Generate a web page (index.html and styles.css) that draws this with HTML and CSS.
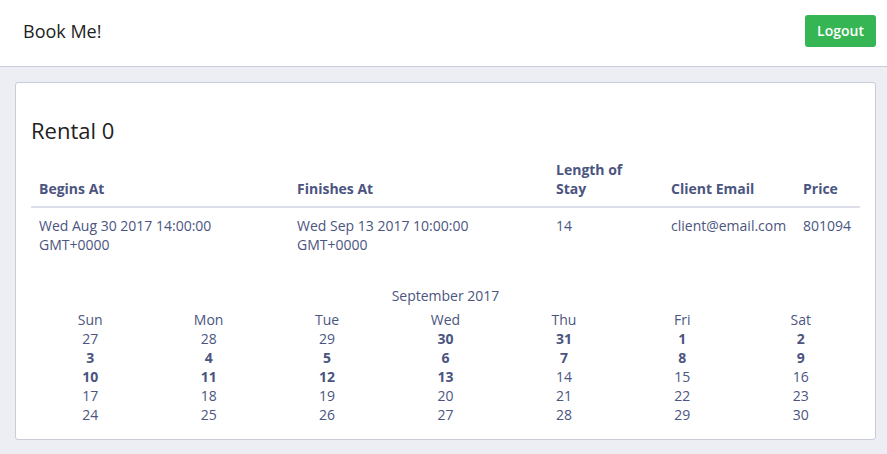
FILE: index.html
```html
<!DOCTYPE html>
<html>
<head>
<meta charset="utf-8">
<link rel="stylesheet" href="styles.css">
</head>
<body>
<header class="topbar">
  <div class="brand">Book Me!</div>
  <button class="logout">Logout</button>
</header>
<main class="page">
  <section class="card">
    <h2 class="title">Rental 0</h2>
    <table class="rentals">
      <thead>
        <tr>
          <th class="c1">Begins At</th>
          <th class="c2">Finishes At</th>
          <th class="c3">Length of Stay</th>
          <th class="c4">Client Email</th>
          <th class="c5">Price</th>
        </tr>
      </thead>
      <tbody>
        <tr>
          <td>Wed Aug 30 2017 14:00:00 GMT+0000</td>
          <td>Wed Sep 13 2017 10:00:00 GMT+0000</td>
          <td>14</td>
          <td>client@email.com</td>
          <td>801094</td>
        </tr>
      </tbody>
    </table>
    <div class="calendar">
      <div class="month">September 2017</div>
      <div class="grid">
        <div class="dn">Sun</div><div class="dn">Mon</div><div class="dn">Tue</div><div class="dn">Wed</div><div class="dn">Thu</div><div class="dn">Fri</div><div class="dn">Sat</div>
        <div>27</div><div>28</div><div>29</div><div class="b">30</div><div class="b">31</div><div class="b">1</div><div class="b">2</div>
        <div class="b">3</div><div class="b">4</div><div class="b">5</div><div class="b">6</div><div class="b">7</div><div class="b">8</div><div class="b">9</div>
        <div class="b">10</div><div class="b">11</div><div class="b">12</div><div class="b">13</div><div>14</div><div>15</div><div>16</div>
        <div>17</div><div>18</div><div>19</div><div>20</div><div>21</div><div>22</div><div>23</div>
        <div>24</div><div>25</div><div>26</div><div>27</div><div>28</div><div>29</div><div>30</div>
      </div>
    </div>
  </section>
</main>
</body>
</html>
```
FILE: styles.css
```css
* { box-sizing: border-box; }
html, body {
  margin: 0;
  padding: 0;
  background: #edeef3;
  font-family: "Open Sans", "Liberation Sans", sans-serif;
  color: #4b5580;
}
.topbar {
  height: 67px;
  background: #ffffff;
  border-bottom: 1px solid #c8ccda;
  display: flex;
  align-items: center;
  justify-content: space-between;
  padding: 0 11px 5px 23px;
}
.brand {
  font-size: 18px;
  color: #222222;
}
.logout {
  width: 71px;
  height: 32px;
  background: #35b553;
  border: none;
  border-radius: 3px;
  color: #ffffff;
  font-family: "Open Sans", "Liberation Sans", sans-serif;
  font-size: 14px;
  font-weight: 600;
  padding: 0;
}
.page {
  padding: 15px 11px 15px 15px;
}
.card {
  background: #ffffff;
  border: 1px solid #c9ccd8;
  border-radius: 3px;
  padding: 32px 15px 13px 15px;
  height: 358px;
}
.title {
  margin: 0 0 7px 0;
  font-size: 22px;
  font-weight: 400;
  line-height: 30px;
  color: #222222;
}
.rentals {
  width: 829px;
  border-collapse: collapse;
  font-size: 14px;
  line-height: 19px;
}
.rentals th {
  text-align: left;
  vertical-align: bottom;
  font-weight: 700;
  padding: 8px;
  border-bottom: 2px solid #dcdfe9;
}
.rentals td {
  vertical-align: top;
  padding: 8px;
}
.c1 { width: 258px; }
.c2 { width: 259px; }
.c3 { width: 115px; }
.c4 { width: 132px; }
.c5 { width: 65px; }
.calendar {
  margin-top: 24px;
  font-size: 14px;
  line-height: 19px;
  text-align: center;
}
.month {
  margin-bottom: 5px;
}
.grid {
  display: grid;
  grid-template-columns: repeat(7, 1fr);
  width: 829px;
}
.grid .dn {
  height: 19px;
}
.grid .b {
  font-weight: 700;
}
```
